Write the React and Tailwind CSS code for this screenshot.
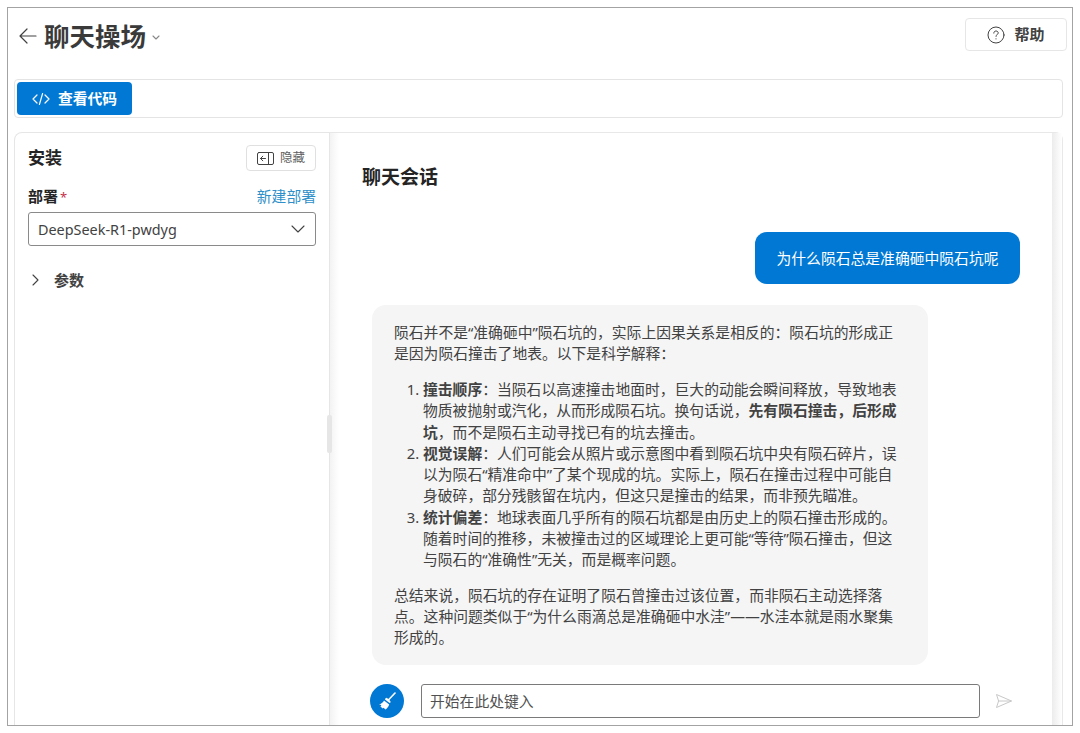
function Broom() {
  return (
    <svg width="24" height="24" viewBox="0 0 24 24" fill="none">
      <path d="M20 4 L13.4 11" stroke="white" strokeWidth="1.6" strokeLinecap="round" />
      <path d="M11.4 8.8 C12.4 9.2 15 11.4 15.6 12.8 C15.8 13.4 15.2 14 14.6 14 L10 10.6 C10.2 9.8 10.8 8.8 11.4 8.8 Z" fill="white" />
      <path d="M9 11.4 L14.2 15.4 C13.4 17.8 12 19.4 10.4 20.4 L8.6 18.8 L7.8 19.6 L5.4 17.6 L6.4 16.6 L5.6 15.8 L4 15.8 C6 14.8 8 13.4 9 11.4 Z" fill="white" />
    </svg>
  );
}

function Send() {
  return (
    <svg width="18" height="16" viewBox="0 0 18 16" fill="none" stroke="#c8c8c8" strokeWidth="1" strokeLinejoin="round">
      <path d="M1.5 1.5 L16.5 8 L1.5 14.5 L3.6 8 Z" />
      <path d="M3.6 8 L16.5 8" />
    </svg>
  );
}

function Arrow() {
  return (
    <svg width="20" height="18" viewBox="0 0 20 18" fill="none" stroke="#424242" strokeWidth="1.2" strokeLinecap="round" strokeLinejoin="round">
      <path d="M18 9 L2 9 M9 2 L2 9 L9 16" />
    </svg>
  );
}

function Chevron({ className, d = "M1 1 L6 6 L11 1", w = 12, h = 7, stroke = "#424242" }) {
  return (
    <svg className={className} width={w} height={h} viewBox={`0 0 ${w} ${h}`} fill="none" stroke={stroke} strokeWidth="1.1" strokeLinecap="round" strokeLinejoin="round">
      <path d={d} />
    </svg>
  );
}

function Help() {
  return (
    <svg width="18" height="18" viewBox="0 0 18 18" fill="none" stroke="#424242" strokeWidth="1" strokeLinecap="round">
      <circle cx="9" cy="9" r="8" />
      <path d="M6.8 7.1 C6.8 5.8 7.8 5 9 5 C10.3 5 11.2 5.8 11.2 6.9 C11.2 8.5 9 8.6 9 10.4" />
      <circle cx="9" cy="12.8" r="0.6" fill="#424242" stroke="none" />
    </svg>
  );
}

function Code() {
  return (
    <svg width="18" height="14" viewBox="0 0 18 14" fill="none" stroke="white" strokeWidth="1.2" strokeLinecap="round" strokeLinejoin="round">
      <path d="M5 3 L1 7 L5 11 M13 3 L17 7 L13 11 M10.6 1.5 L7.4 12.5" />
    </svg>
  );
}

function Hide() {
  return (
    <svg width="17" height="13" viewBox="0 0 17 13" fill="none" stroke="#424242" strokeWidth="1" strokeLinecap="round" strokeLinejoin="round">
      <rect x="0.5" y="0.5" width="16" height="12" rx="1.5" />
      <path d="M11.5 0.5 L11.5 12.5 M8.5 6.5 L3.5 6.5 M5.8 4.2 L3.5 6.5 L5.8 8.8" />
    </svg>
  );
}

export default function App() {
  return (
    <div className="w-[1080px] h-[733px] bg-white p-[7px] overflow-hidden font-['Noto_Sans','Noto_Sans_CJK_SC',sans-serif] text-[#424242]">
      <div className="h-full w-full border border-[#a3a3a3] flex flex-col overflow-hidden">
        <header className="h-[71px] shrink-0 flex pl-[10px] pr-[5px]">
          <div className="flex items-center h-[55px]">
            <Arrow />
            <h1 className="ml-[6px] text-[25.5px] leading-[34px] font-bold text-[#3a3a3a]">聊天操场</h1>
            <Chevron className="ml-[6px] mt-[3px]" w={8} h={5} d="M1 1 L4 4 L7 1" stroke="#888" />
          </div>
          <button className="ml-auto mt-[10px] w-[102px] h-[33px] border border-[#e6e6e6] rounded-[4px] flex items-center justify-center gap-[9px] text-[15px] font-bold text-[#424242]">
            <Help />
            <span>帮助</span>
          </button>
        </header>

        <div className="shrink-0 ml-[6px] mr-[9px] h-[39px] border border-[#e4e4e4] rounded-[4px] pl-[2px] pt-[2px]">
          <button className="w-[115px] h-[33px] rounded-[4px] bg-[#0078d4] text-white flex items-center justify-center gap-[8px] text-[14.8px] font-bold">
            <Code />
            <span>查看代码</span>
          </button>
        </div>

        <main className="flex-1 min-h-0 flex ml-[6px] mr-[9px] mt-[14px]">
          <aside className="w-[316px] shrink-0 border border-[#e6e6e6] border-b-0 rounded-tl-[8px] pl-[13px] pr-[13px] pt-[12px]">
            <div className="flex items-center justify-between h-[26px]">
              <h2 className="text-[17px] font-bold text-[#242424]">安装</h2>
              <button className="w-[70px] h-[26px] border border-[#e0e0e0] rounded-[4px] flex items-center justify-center gap-[6px] text-[12.5px] text-[#616161]">
                <Hide />
                <span>隐藏</span>
              </button>
            </div>
            <div className="flex items-center justify-between mt-[13px] h-[24px]">
              <label className="text-[15px] font-bold text-[#242424]">部署<span className="text-[#c4314b] font-normal text-[13px] ml-[2px]">*</span></label>
              <a className="text-[14.8px] text-[#2f8fc9]">新建部署</a>
            </div>
            <div className="mt-[4px] h-[34px] border border-[#8a8a8a] rounded-[3px] flex items-center justify-between pl-[9px] pr-[10px] text-[14.4px] text-[#424242]">
              <span className="translate-y-px">DeepSeek-R1-pwdyg</span>
              <Chevron w={14} h={8} d="M1 1 L7 7 L13 1" />
            </div>
            <div className="flex items-center mt-[23px] h-[22px]">
              <Chevron className="ml-[4px]" w={7} h={12} d="M1 1 L6 6 L1 11" />
              <span className="ml-[15px] text-[15px] font-bold text-[#424242]">参数</span>
            </div>
          </aside>

          <section className="relative flex-1 min-w-0 flex border-t border-r border-[#e8e8e8] rounded-tr-[8px]">
            <div className="absolute left-[-3px] top-[282px] w-[5px] h-[38px] bg-[#e6e6e6] rounded-[2px]" />
            <div className="w-[9px] shrink-0 bg-gradient-to-r from-[#f3f3f3] to-white" />
            <div className="flex-1 min-w-0 flex flex-col pl-[23px] pr-[32px]">
              <h2 className="mt-[31px] h-[27px] leading-[27px] text-[19px] font-bold text-[#242424]">聊天会话</h2>
              <div className="flex justify-end mt-[41px]">
                <div className="w-[265px] h-[52px] rounded-[12px] bg-[#0078d4] text-white text-[14.8px] flex items-center justify-center">为什么陨石总是准确砸中陨石坑呢</div>
              </div>
              <div className="mt-[21px] ml-[10px] w-[556px] h-[360px] rounded-[14px] bg-[#f5f5f5] pl-[22px] pr-[26px] pt-[17px] text-[14.8px] leading-[21.25px] text-[#424242]">
                <p>陨石并不是“准确砸中”陨石坑的，实际上因果关系是相反的：陨石坑的形成正是因为陨石撞击了地表。以下是科学解释：</p>
                <ol className="list-decimal pl-[29px] mt-[14.5px]">
                  <li><b>撞击顺序</b>：当陨石以高速撞击地面时，巨大的动能会瞬间释放，导致地表物质被抛射或汽化，从而形成陨石坑。换句话说，<b>先有陨石撞击，后形成坑</b>，而不是陨石主动寻找已有的坑去撞击。</li>
                  <li><b>视觉误解</b>：人们可能会从照片或示意图中看到陨石坑中央有陨石碎片，误以为陨石“精准命中”了某个现成的坑。实际上，陨石在撞击过程中可能自身破碎，部分残骸留在坑内，但这只是撞击的结果，而非预先瞄准。</li>
                  <li><b>统计偏差</b>：地球表面几乎所有的陨石坑都是由历史上的陨石撞击形成的。随着时间的推移，未被撞击过的区域理论上更可能“等待”陨石撞击，但这与陨石的“准确性”无关，而是概率问题。</li>
                </ol>
                <p className="mt-[14.5px]">总结来说，陨石坑的存在证明了陨石曾撞击过该位置，而非陨石主动选择落点。这种问题类似于“为什么雨滴总是准确砸中水洼”——水洼本就是雨水聚集形成的。</p>
              </div>
              <div className="flex items-center mt-[19px] ml-[8px]">
                <div className="w-[34px] h-[34px] rounded-full bg-[#0078d4] flex items-center justify-center shrink-0">
                  <Broom />
                </div>
                <div className="ml-[17px] w-[559px] h-[34px] border border-[#7a7a7a] rounded-[3px] flex items-center pl-[8px] text-[14.8px] text-[#505050]">开始在此处键入</div>
                <div className="ml-[15px]"><Send /></div>
              </div>
            </div>
            <div className="w-[10px] shrink-0 bg-gradient-to-r from-[#ececec] to-white" />
          </section>
        </main>
      </div>
    </div>
  );
}
